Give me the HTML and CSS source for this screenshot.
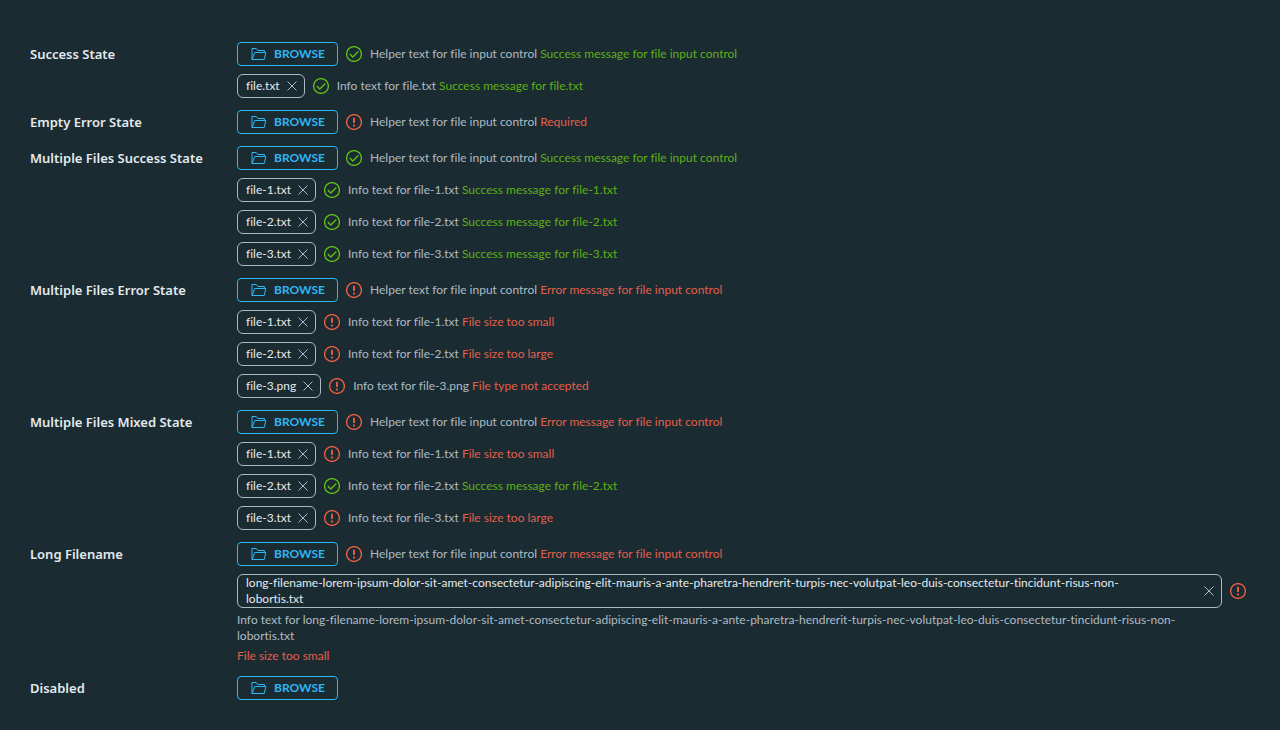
FILE: index.html
```
<!DOCTYPE html>
<html lang="en">
<head>
<meta charset="utf-8">
<meta name="viewport" content="width=device-width, initial-scale=1">
<title>File input states</title>
<link rel="stylesheet" href="styles.css">
</head>
<body>
<svg class="sprite" aria-hidden="true">
  <symbol id="folder" viewBox="0 0 16 14">
    <path d="M1 12.5V1.5H5.2L6.8 3.5H13.4V5.5M1 12.5L3.8 5.5H14.8L13.2 12.5Z"/>
  </symbol>
  <symbol id="ok" viewBox="0 0 16 16">
    <circle cx="8" cy="8" r="7.4"/><path d="M3.8 8L6.8 11L12.3 5.5"/>
  </symbol>
  <symbol id="error" viewBox="0 0 16 16">
    <circle cx="8" cy="8" r="7.4"/><path class="mark" d="M8 3.8V9M8 10.6V12.4"/>
  </symbol>
  <symbol id="close" viewBox="0 0 16 16"><path d="M3.5 3.5L12.5 12.5M12.5 3.5L3.5 12.5"/></symbol>
</svg>
<form class="form" id="form"></form>
<script src="script.js"></script>
</body>
</html>
```
FILE: styles.css
```
body {
  margin: 0;
  background: #1b2b32;
  color: #adbbc4;
  font: 400 12px/16px Lato, "Liberation Sans", sans-serif;
  font-variant-ligatures: none;
}

.sprite {
  position: absolute;
  width: 0;
  height: 0;
}

.form {
  display: flex;
  flex-direction: column;
  gap: 12px;
  padding: 42px 34px 30px 30px;
}

.control {
  display: grid;
  grid-template-columns: 207px 1fr;
  align-items: start;
}

.label {
  color: #e3eaed;
  font-family: "Noto Sans", "Liberation Sans", sans-serif;
  font-size: 13px;
  font-weight: 600;
  line-height: 24px;
}

.rows {
  display: flex;
  flex-direction: column;
  gap: 8px;
  min-width: 0;
}

.row {
  display: flex;
  align-items: center;
  gap: 8px;
}

.browse {
  display: flex;
  align-items: center;
  gap: 7px;
  box-sizing: border-box;
  min-width: 101px;
  height: 24px;
  padding: 0 12px 0 13px;
  border: 1px solid #2db7f5;
  border-radius: 4px;
  background: transparent;
  color: #2db7f5;
  font: inherit;
  font-weight: 700;
}

.folder {
  flex: none;
  width: 16px;
  height: 14px;
  fill: none;
  stroke: currentColor;
  stroke-linejoin: round;
}

.status {
  flex: none;
  width: 16px;
  height: 16px;
  fill: none;
  stroke-width: 1.3;
}

.status.ok {
  stroke: #60c013;
}

.status.error {
  stroke: #f35e44;
}

.mark {
  stroke-width: 1.8;
}

.chip {
  display: flex;
  align-items: center;
  gap: 4px;
  box-sizing: border-box;
  min-height: 24px;
  padding: 0 4px 0 8px;
  border: 1px solid #adbbc4;
  border-radius: 6px;
  color: #e3eaed;
}

.name {
  flex: 1;
}

.remove {
  display: flex;
  padding: 0;
  border: 0;
  background: transparent;
  color: #adbbc4;
}

.cross {
  width: 16px;
  height: 16px;
  fill: none;
  stroke: currentColor;
}

.text,
.note {
  margin: 0;
}

.message.ok {
  color: #5eb015;
}

.message.error {
  color: #e25f4a;
}

.long {
  display: flex;
  flex-direction: column;
  gap: 4px;
}

.long .chip {
  flex: 1;
}
```
FILE: script.js
```
const helper = "Helper text for file input control";
const controlOk = ["ok", "Success message for file input control"];
const controlError = ["error", "Error message for file input control"];
const longName = "long-filename-lorem-ipsum-dolor-sit-amet-consectetur-adipiscing-elit-mauris-a-ante-pharetra-hendrerit-turpis-nec-volutpat-leo-duis-consectetur-tincidunt-risus-non-lobortis.txt";
const success = name => [name, "ok", "Success message for " + name];
const small = name => [name, "error", "File size too small"];
const large = name => [name, "error", "File size too large"];

const controls = [
  ["Success State", controlOk, [success("file.txt")]],
  ["Empty Error State", ["error", "Required"], []],
  ["Multiple Files Success State", controlOk, [success("file-1.txt"), success("file-2.txt"), success("file-3.txt")]],
  ["Multiple Files Error State", controlError, [small("file-1.txt"), large("file-2.txt"), ["file-3.png", "error", "File type not accepted"]]],
  ["Multiple Files Mixed State", controlError, [small("file-1.txt"), success("file-2.txt"), large("file-3.txt")]],
  ["Long Filename", controlError, [small(longName)]],
  ["Disabled", null, []]
];

const icon = (id, cls) => `<svg class="${cls}" aria-hidden="true"><use href="#${id}"/></svg>`;
const status = state => icon(state, "status " + state);
const message = (state, text) => `<span class="message ${state}">${text}</span>`;
const breakName = name => name.replace("-lobortis", "-<br>lobortis");
const chip = name => `<span class="chip"><span class="name">${breakName(name)}</span><button type="button" class="remove" aria-label="Remove ${name}">${icon("close", "cross")}</button></span>`;

function fileRow([name, state, text]) {
  if (name === longName) {
    return `<div class="long"><div class="row">${chip(name)}${status(state)}</div><p class="note">Info text for ${breakName(name)}</p><p class="note">${message(state, text)}</p></div>`;
  }
  return `<div class="row">${chip(name)}${status(state)}<p class="text">Info text for ${name} ${message(state, text)}</p></div>`;
}

document.getElementById("form").innerHTML = controls.map(([label, main, files], i) => `
  <div class="control">
    <label class="label" for="browse-${i}">${label}</label>
    <div class="rows">
      <div class="row">
        <button type="button" class="browse" id="browse-${i}">${icon("folder", "folder")}BROWSE</button>
        ${main ? `${status(main[0])}<p class="text">${helper} ${message(...main)}</p>` : ""}
      </div>
      ${files.map(fileRow).join("")}
    </div>
  </div>`).join("");
```
